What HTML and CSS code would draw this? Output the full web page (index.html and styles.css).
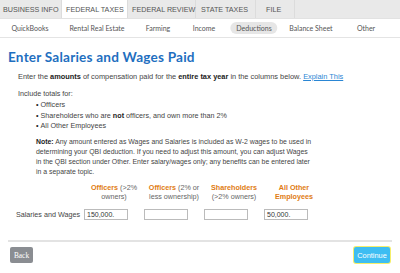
FILE: index.html
```html
<!DOCTYPE html>
<html>
<head>
<meta charset="utf-8">
<link rel="stylesheet" href="styles.css">
</head>
<body>
<nav class="tabs">
  <div class="tab">BUSINESS INFO</div>
  <div class="tab active">FEDERAL TAXES</div>
  <div class="tab">FEDERAL REVIEW</div>
  <div class="tab">STATE TAXES</div>
  <div class="tab">FILE</div>
</nav>
<nav class="subtabs">
  <div class="sub s1">QuickBooks</div>
  <div class="sub s2">Rental Real Estate</div>
  <div class="sub s3">Farming</div>
  <div class="sub s4">Income</div>
  <div class="sub s5 pill">Deductions</div>
  <div class="sub s6">Balance Sheet</div>
  <div class="sub s7">Other</div>
</nav>
<main class="content">
  <h1 class="title">Enter Salaries and Wages Paid</h1>
  <p class="intro">Enter the <b>amounts</b> of compensation paid for the <b>entire tax year</b> in the columns below. <a class="link">Explain This</a></p>
  <p class="include">Include totals for:</p>
  <ul class="list">
    <li>Officers</li>
    <li>Shareholders who are <b>not</b> officers, and own more than 2%</li>
    <li>All Other Employees</li>
  </ul>
  <p class="note"><b>Note:</b> Any amount entered as Wages and Salaries is included as W-2 wages to be used in determining your QBI deduction. If you need to adjust this amount, you can adjust Wages in the QBI section under Other. Enter salary/wages only; any benefits can be entered later in a separate topic.</p>
  <div class="grid">
    <div class="blank"></div>
    <div class="head"><span class="or">Officers</span> (&gt;2%<br>owners)</div>
    <div class="head"><span class="or">Officers</span> (2% or<br>less ownership)</div>
    <div class="head"><span class="or">Shareholders</span><br>(&gt;2% owners)</div>
    <div class="head"><span class="or">All Other<br>Employees</span></div>
    <div class="label">Salaries and Wages</div>
    <div class="cell"><div class="input">150,000.</div></div>
    <div class="cell"><div class="input"></div></div>
    <div class="cell"><div class="input"></div></div>
    <div class="cell"><div class="input">50,000.</div></div>
  </div>
</main>
<footer class="footer">
  <div class="btn back">Back</div>
  <div class="btn cont">Continue</div>
</footer>
</body>
</html>
```
FILE: styles.css
```css
html, body { margin: 0; padding: 0; background: #fff; }
body { width: 400px; height: 273px; overflow: hidden; font-family: "Liberation Sans", Arial, sans-serif; color: #444; }
.tabs { display: flex; height: 19px; background: #e9e9e9; border-bottom: 1px solid #e2e2e2; box-sizing: border-box; }
.tab { display: flex; align-items: center; font-size: 7.2px; color: #555; white-space: nowrap; border-right: 1px solid #dcdcdc; box-sizing: border-box; padding-left: 4px; }
.tab:nth-child(1) { width: 62px; padding-left: 3px; }
.tab:nth-child(2) { width: 66px; }
.tab:nth-child(3) { width: 68px; }
.tab:nth-child(4) { width: 60px; padding-left: 5px; }
.tab:nth-child(5) { width: 39px; padding-left: 10px; }
.tab.active { background: #fff; }
.subtabs { position: relative; height: 18px; border-bottom: 1px solid #e4e4e4; font-family: "Lato", "Liberation Sans", sans-serif; font-size: 7px; color: #555; }
.sub { position: absolute; top: 50%; transform: translate(-50%, -50%); white-space: nowrap; }
.s1 { left: 30px; } .s2 { left: 97px; } .s3 { left: 158px; } .s4 { left: 204px; } .s5 { left: 254px; } .s6 { left: 311px; } .s7 { left: 366px; }
.pill { background: #e6e6e6; border-radius: 7px; padding: 2px 6px; }
.content { padding: 0 8px; }
.title { margin: 12px 0 0 0; font-family: "Lato", "Open Sans", sans-serif; font-weight: 700; font-size: 13.6px; color: #1f6fc0; line-height: 14px; letter-spacing: 0.2px; }
.intro { margin: 8px 0 0 10px; font-size: 7.4px; line-height: 10px; }
.intro b, .list b, .note b { color: #222; }
.link { color: #2a86d4; text-decoration: underline; }
.include { margin: 7px 0 0 10px; font-size: 7.2px; line-height: 10px; }
.list { margin: 1px 0 0 0; padding: 0 0 0 28px; font-size: 7.2px; line-height: 10.5px; list-style: none; }
.list li::before { content: "\2022"; color: #222; margin-right: 2px; }
.note { margin: 5px 0 0 28px; width: 278px; font-size: 6.9px; line-height: 10px; }
.grid { display: grid; grid-template-columns: 76px 60px 60px 60px 60px; margin-top: 6px; align-items: center; }
.head { text-align: center; font-size: 7.2px; line-height: 9.5px; color: #666; white-space: nowrap; }
.or { color: #e07b12; font-weight: 700; }
.label { font-size: 7.2px; text-align: right; padding-right: 4px; margin-top: 7px; color: #444; white-space: nowrap; }
.cell { margin-top: 7px; }
.input { width: 44px; height: 11px; box-sizing: border-box; border: 1px solid #bbb; font-size: 7px; line-height: 9px; padding-left: 2px; color: #333; }
.footer { position: absolute; left: 8px; right: 8px; top: 240px; border-top: 2px solid #e3e3e3; display: flex; justify-content: space-between; padding: 5px 2px 0 2px; }
.btn { height: 16px; border-radius: 2px; color: #fff; font-size: 7.4px; display: flex; align-items: center; justify-content: center; }
.back { width: 23px; background: #8a8d92; font-family: "Liberation Serif", serif; }
.cont { width: 36px; background: #3dbdf2; box-shadow: 0 0 0 1px #f5ee6a; font-family: "Liberation Sans", sans-serif; }
```
